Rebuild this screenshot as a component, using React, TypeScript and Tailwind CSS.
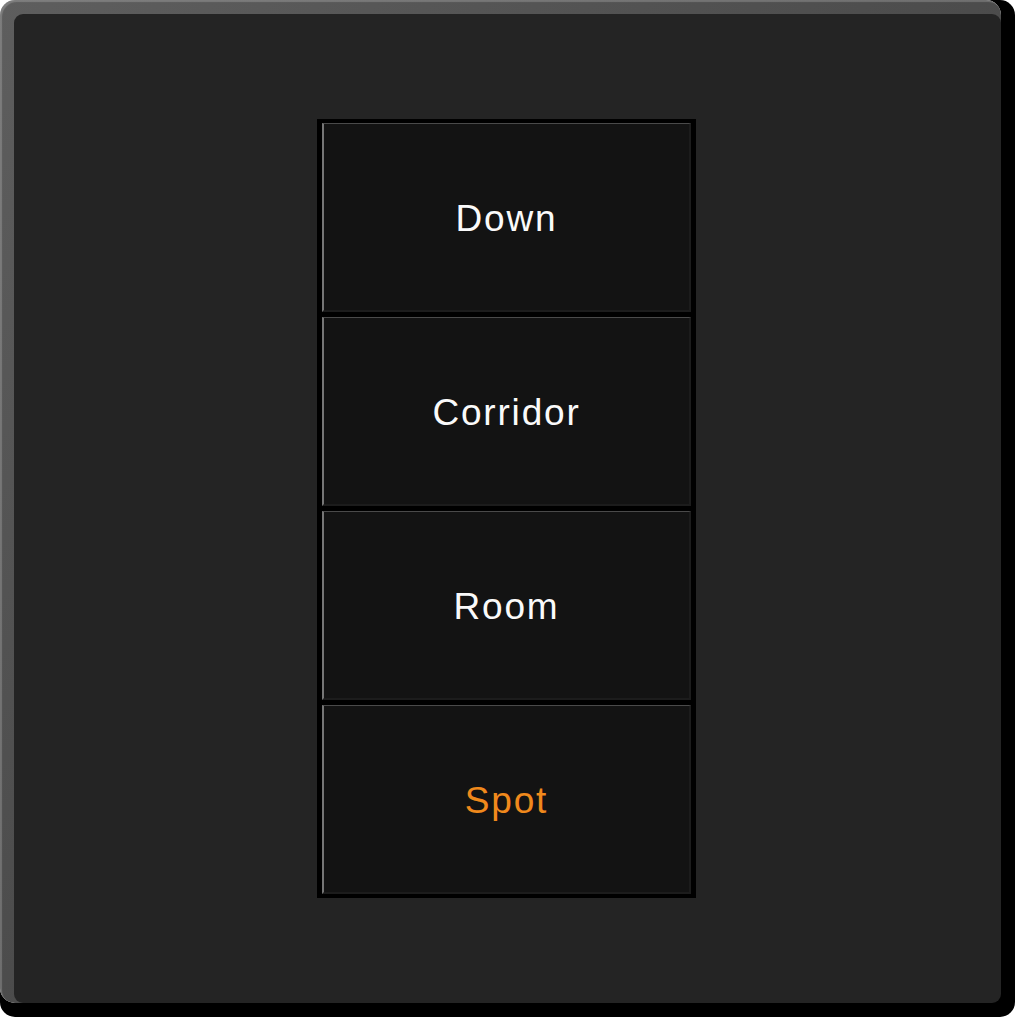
import React from "react";

const labels: { text: string; color: string }[] = [
  { text: "Down", color: "text-[#fafafa]" },
  { text: "Corridor", color: "text-[#fafafa]" },
  { text: "Room", color: "text-[#fafafa]" },
  { text: "Spot", color: "text-[#f0891c]" },
];

export default function App() {
  return (
    <div className="w-[1015px] h-[1017px] bg-white" style={{ fontFamily: '"Liberation Sans", Arial, sans-serif' }}>
      <div className="w-[1001px] h-[1003px] rounded-[15px] bg-gradient-to-br from-[#5e5e5e] to-[#3a3a3a] pt-[14px] pl-[14px] shadow-[14px_0_0_#000,0_14px_0_#000,14px_14px_0_#000,inset_2px_2px_1px_rgba(255,255,255,0.2)]">
        <div className="w-[987px] h-[989px] rounded-[9px] bg-[#242424] flex items-center justify-center pb-[4px] pr-[2px]">
          <div className="mt-[4px] w-[379px] h-[779px] bg-black pt-[4px] pb-[4px] pl-[5px] pr-[5px] flex flex-col gap-[5px]">
            {labels.map((l) => (
              <div
                key={l.text}
                className="flex-1 bg-[#131313] border-t border-t-[#4a4a4a] border-l-2 border-l-[#767676] border-r-2 border-r-[#1c1c1c] border-b-2 border-b-[#1c1c1c] flex items-center justify-center"
              >
                <span className={`text-[37px] leading-none tracking-[1.8px] translate-y-[1px] ${l.color}`}>{l.text}</span>
              </div>
            ))}
          </div>
        </div>
      </div>
    </div>
  );
}
